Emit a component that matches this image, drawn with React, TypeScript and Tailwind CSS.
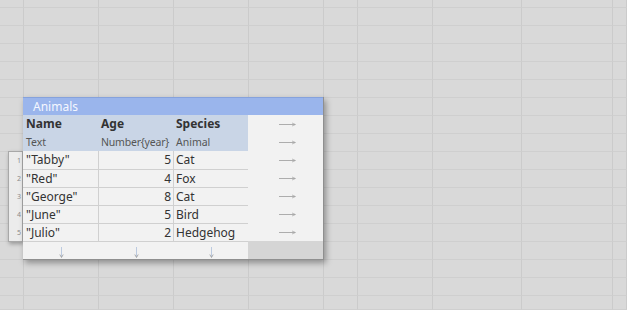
import React from "react";

const colClasses = [
  "w-[24px]",
  "w-[75px]",
  "w-[75px]",
  "w-[75px]",
  "w-[75px]",
  "w-[34px]",
  "w-[75px]",
  "w-[89px]",
  "w-[91px]",
  "flex-1",
];

const rowClasses = [
  "h-[8px]",
  ...Array.from({ length: 16 }, () => "h-[18px]"),
  "flex-1",
];

function RightArrow() {
  return (
    <svg width="17" height="5" viewBox="0 0 17 5" className="block">
      <line x1="0" y1="2.5" x2="16" y2="2.5" stroke="#a5a5a5" strokeWidth="0.9" />
      <path d="M13 1 L16.5 2.5 L13 4" fill="none" stroke="#a5a5a5" strokeWidth="0.7" />
    </svg>
  );
}

function DownArrow() {
  return (
    <svg width="5" height="11" viewBox="0 0 5 11" className="block">
      <line x1="2.5" y1="0" x2="2.5" y2="10" stroke="#bccadf" strokeWidth="1" />
      <path d="M0.8 7.5 L2.5 10.5 L4.2 7.5" fill="none" stroke="#9a9a9a" strokeWidth="0.8" />
    </svg>
  );
}

const data = [
  { name: '"Tabby"', age: 5, species: "Cat" },
  { name: '"Red"', age: 4, species: "Fox" },
  { name: '"George"', age: 8, species: "Cat" },
  { name: '"June"', age: 5, species: "Bird" },
  { name: '"Julio"', age: 2, species: "Hedgehog" },
];

export default function App() {
  return (
    <div
      className="relative w-[627px] h-[310px] overflow-hidden bg-[#d9d9d9] text-[#333]"
      style={{ fontFamily: '"Noto Sans", "Open Sans", sans-serif' }}
    >
      {/* background grid */}
      <div className="flex flex-col w-full h-full">
        {rowClasses.map((rc, ri) => (
          <div key={ri} className={`flex ${rc}`}>
            {colClasses.map((cc, ci) => (
              <div
                key={ci}
                className={`${cc} h-full border-r border-b border-r-[#cbcbcb] border-b-[#cfcfcf]`}
              />
            ))}
          </div>
        ))}
      </div>

      {/* overlay table */}
      <div className="absolute left-[8px] top-[97px] flex">
        {/* row numbers gutter */}
        <div className="w-[15px] flex flex-col">
          <div className="h-[54px]" />
          <div className="h-[91px] bg-[#ececec] border border-[#a8a8a8] shadow-[1px_2px_4px_rgba(0,0,0,0.3)] flex flex-col">
            {[1, 2, 3, 4, 5].map((n) => (
              <div
                key={n}
                className="h-[18px] flex items-center justify-end pr-[1px] text-[7px] text-[#8c8c8c] leading-none"
              >
                {n}
              </div>
            ))}
          </div>
        </div>

        <div className="w-[301px] flex flex-col border-r border-b border-[#8f8f8f] shadow-[2px_3px_6px_rgba(0,0,0,0.35)] bg-[#f2f2f2]">
          {/* title */}
          <div className="h-[18px] bg-[#9ab5ec] border-t border-[#86a2dc] flex items-center pl-[10px] pt-[1px] text-[12px] text-[#f4f7ff] leading-none">
            Animals
          </div>

          {/* column names */}
          <div className="flex h-[18px]">
            <div className="w-[76px] bg-[#c9d5e6] pl-[3px] text-[12px] font-bold leading-[18px]">Name</div>
            <div className="w-[75px] bg-[#c9d5e6] pl-[2px] text-[12px] font-bold leading-[18px]">Age</div>
            <div className="w-[74px] bg-[#c9d5e6] pl-[2px] text-[12px] font-bold leading-[18px]">Species</div>
            <div className="w-[75px] flex items-center justify-center pl-[3px]">
              <RightArrow />
            </div>
          </div>

          {/* types */}
          <div className="flex h-[18px] text-[10.5px] text-[#555] leading-[18px]">
            <div className="w-[76px] bg-[#c9d5e6] pl-[3px]">Text</div>
            <div className="w-[75px] bg-[#c9d5e6] pl-[2px] whitespace-nowrap tracking-[-0.2px]">Number{"{year}"}</div>
            <div className="w-[74px] bg-[#c9d5e6] pl-[2px]">Animal</div>
            <div className="w-[75px] flex items-center justify-center pl-[3px]">
              <RightArrow />
            </div>
          </div>

          {/* data rows */}
          {data.map((r, i) => (
            <div key={i} className="flex h-[18px] text-[12px] leading-[17px]">
              <div className={`w-[76px] border-r border-[#d0d0d0] pl-[3px] ${i > 0 ? "border-t" : ""}`}>
                {r.name}
              </div>
              <div className={`w-[75px] border-r border-[#d0d0d0] pr-[2px] text-right ${i > 0 ? "border-t" : ""}`}>
                {r.age}
              </div>
              <div className={`w-[74px] border-[#d0d0d0] pl-[2px] ${i > 0 ? "border-t" : ""}`}>
                {r.species}
              </div>
              <div className="w-[75px] flex items-center justify-center pl-[3px]">
                <RightArrow />
              </div>
            </div>
          ))}

          {/* footer */}
          <div className="flex h-[18px]">
            <div className="w-[225px] flex border-t border-[#d0d0d0]">
              <div className="w-[76px] flex items-center justify-center pt-[3px]">
                <DownArrow />
              </div>
              <div className="w-[75px] flex items-center justify-center pt-[3px]">
                <DownArrow />
              </div>
              <div className="w-[74px] flex items-center justify-center pt-[3px]">
                <DownArrow />
              </div>
            </div>
            <div className="w-[75px] bg-[#d5d5d5]" />
          </div>
        </div>
      </div>
    </div>
  );
}
